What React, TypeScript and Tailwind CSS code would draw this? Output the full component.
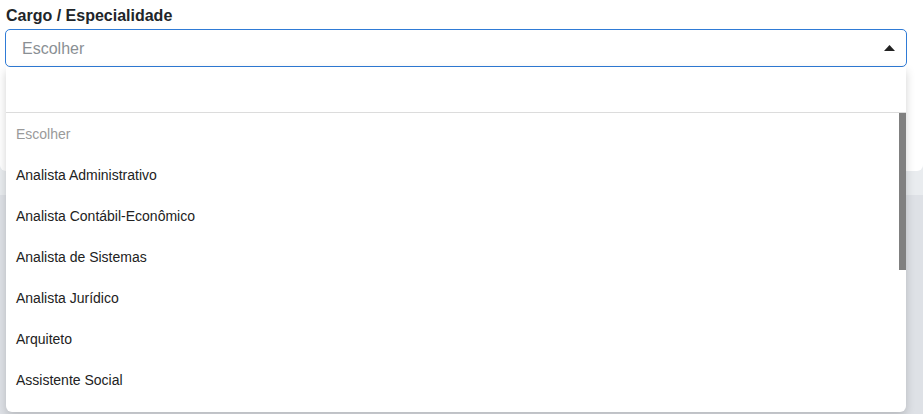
import React from 'react';

const options = [
  'Analista Administrativo',
  'Analista Contábil-Econômico',
  'Analista de Sistemas',
  'Analista Jurídico',
  'Arquiteto',
  'Assistente Social',
];

const App: React.FC = () => {
  return (
    <div className="relative h-[414px] w-[923px] overflow-hidden bg-[#e9ecef] font-['Liberation_Sans',Arial,sans-serif]">
      {/* page behind the open dropdown */}
      <div className="h-[171px] rounded-b-[6px] bg-white px-[5px] pt-[5px]">
        <label className="block pl-[1px] text-[16px] font-bold leading-[21px] text-[#212529]">
          Cargo / Especialidade
        </label>
        <div className="mt-[3px] flex h-[38px] w-[902px] items-center justify-between rounded-[5px] border border-[#2f7bd6] bg-white pl-[16px] pr-[10px]">
          <span className="pt-[2px] text-[16px] text-[#8a8f94]">Escolher</span>
          <svg width="11" height="6" viewBox="0 0 11 6" className="mr-[1px]">
            <path d="M0 6 L5.5 0 L11 6 Z" fill="#222" />
          </svg>
        </div>
      </div>
      <div className="mt-[24px] h-[230px] bg-[#dee1e6]" />

      {/* dropdown */}
      <div className="absolute left-[6px] top-[67px] w-[900px] overflow-hidden rounded-b-[6px] bg-white shadow-[0_4px_10px_rgba(0,0,0,0.18)]">
        <div className="h-[46px] border-b border-[#dcdcdc]" />
        <div className="relative h-[299px]">
          <ul className="pt-[1px] text-[14px] leading-[41px] text-[#222]">
            <li className="px-[10px] text-[#9a9a9a]">Escolher</li>
            {options.map((o) => (
              <li key={o} className="px-[10px]">
                {o}
              </li>
            ))}
          </ul>
          <div className="absolute right-0 top-0 h-[157px] w-[7px] bg-[#808080]" />
        </div>
      </div>
    </div>
  );
};

export default App;
